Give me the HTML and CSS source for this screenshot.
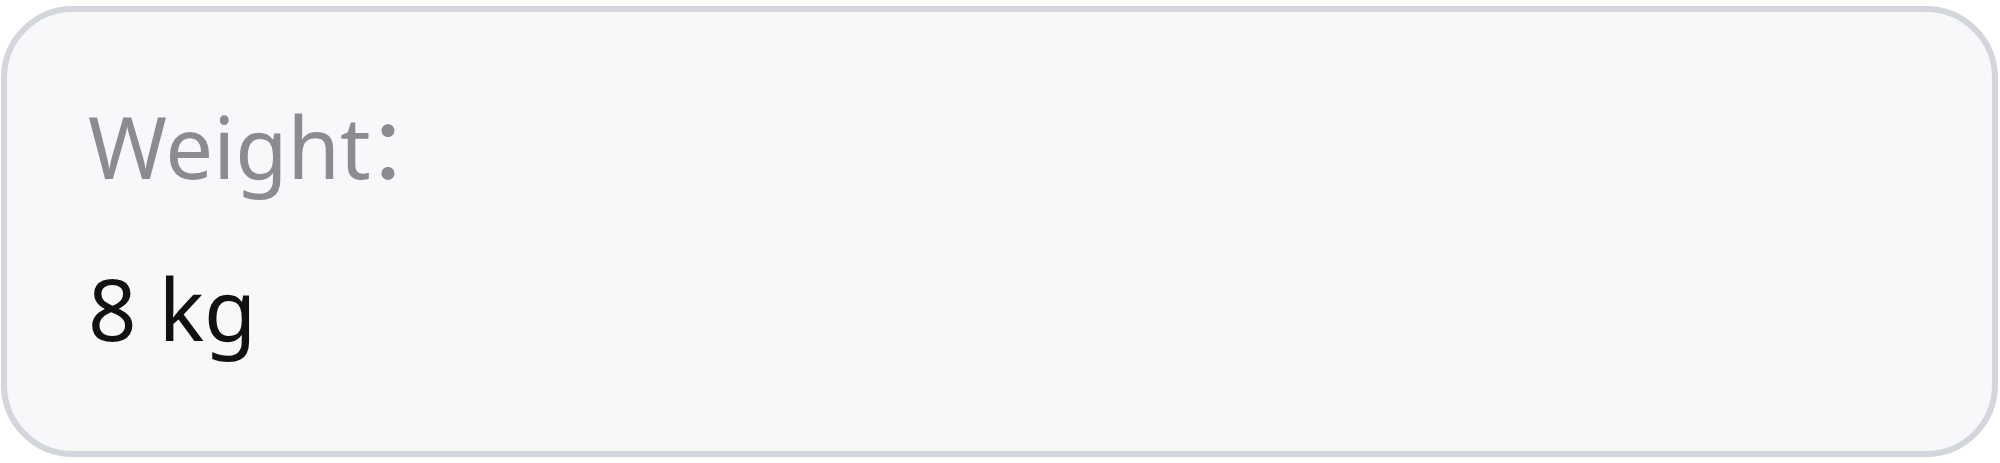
FILE: index.html
```html
<!DOCTYPE html>
<html lang="en">
<head>
  <meta charset="UTF-8">
  <title>Weight</title>
  <link rel="stylesheet" href="styles.css">
</head>
<body>
  <div class="info-card">
    <div class="info-label">Weight<span class="colon">：</span></div>
    <div class="info-value">8 kg</div>
  </div>
</body>
</html>
```

FILE: styles.css
```css
body {
  margin: 0;
  padding: 6px 2px 6px 1px;
  background-color: #fff;
  font-family: "Noto Sans", "Noto Sans CJK SC", sans-serif;
}

.info-card {
  box-sizing: border-box;
  height: 451px;
  padding: 82px 80px 0 81px;
  background-color: #f8f8fb;
  border: 6px solid #d3d6dc;
  border-radius: 72px;
}

.info-label {
  font-size: 85px;
  line-height: 104px;
  color: #8b8b90;
}

.info-label .colon {
  margin-left: -4px;
}

.info-value {
  margin-top: 58px;
  font-size: 85px;
  line-height: 104px;
  color: #111;
}
```
